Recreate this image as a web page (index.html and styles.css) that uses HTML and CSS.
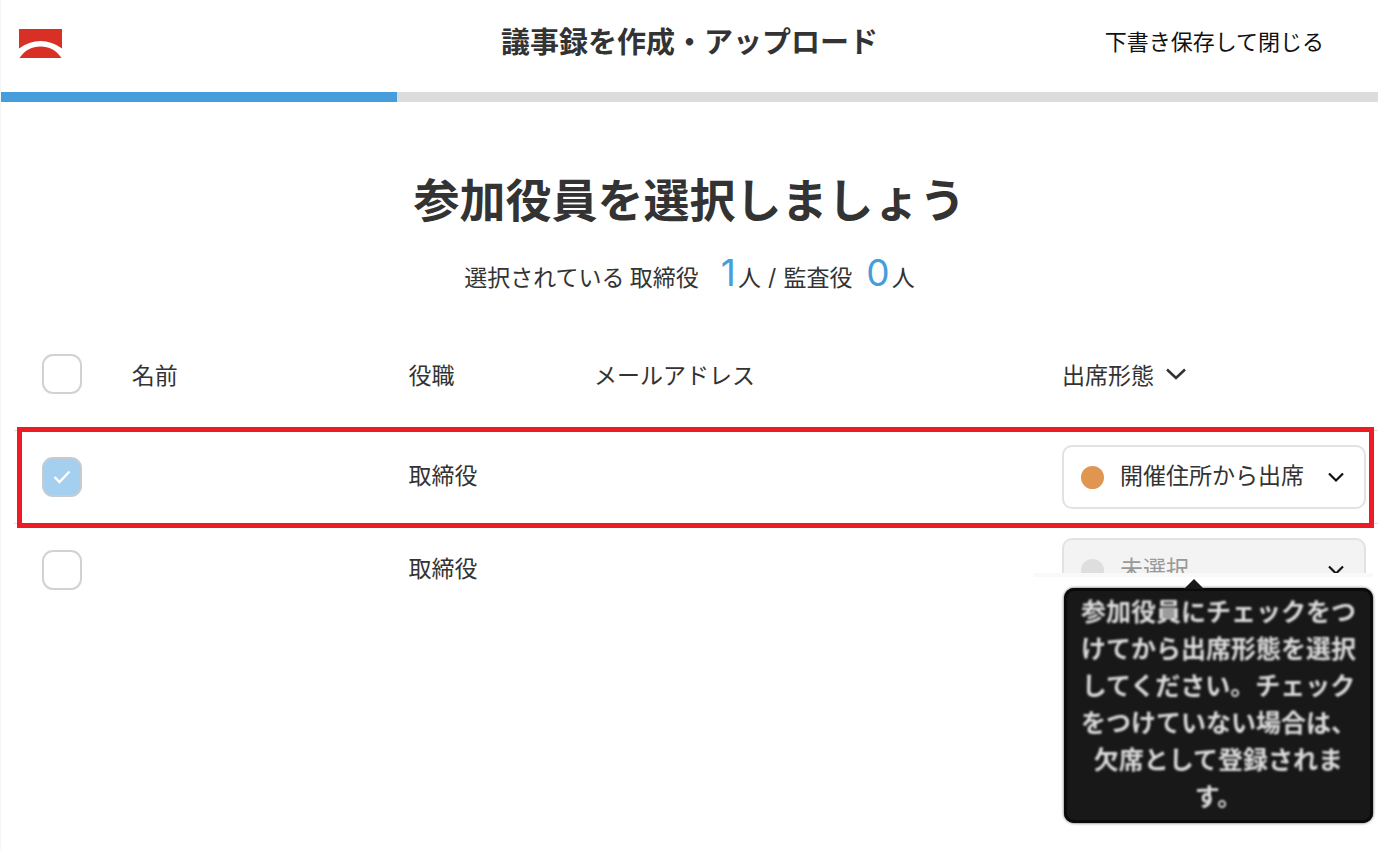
FILE: index.html
```html
<!DOCTYPE html>
<html lang="ja">
<head>
<meta charset="utf-8">
<title>議事録を作成・アップロード</title>
<link rel="stylesheet" href="styles.css">
</head>
<body>
<div class="page">
  <header class="header">
    <a class="logo" href="#" aria-label="ホーム">
      <svg width="43" height="29" viewBox="0 0 43 29" aria-hidden="true">
        <path fill="#d93025" d="M0 0H43V19.500Q33 12 21.500 12T0 19.500Z"/>
        <path fill="#d93025" d="M0.500 29C6 21 13 17.500 21.500 17.500S37 21 42.500 29Z"/>
      </svg>
    </a>
    <p class="header-title">議事録を作成・アップロード</p>
    <button class="close-button" type="button">下書き保存して閉じる</button>
  </header>
  <div class="progress"><div class="progress-fill"></div></div>

  <main>
    <h1 class="heading">参加役員を選択しましょう</h1>
    <p class="summary">選択されている 取締役 <span class="count">1</span>人 <span class="separator">/</span> 監査役 <span class="count">0</span>人</p>

    <table class="officers">
      <colgroup>
        <col class="col-check"><col class="col-name"><col class="col-role"><col class="col-mail"><col class="col-form">
      </colgroup>
      <thead>
        <tr>
          <th class="check-cell"><label class="check"><input type="checkbox" aria-label="すべて選択"></label></th>
          <th>名前</th>
          <th>役職</th>
          <th>メールアドレス</th>
          <th>
            <button class="sort-button" type="button">出席形態
              <svg width="22" height="14" viewBox="0 0 22 14" aria-hidden="true"><path d="M2 2.500L11 11L20 2.500" fill="none" stroke="#333" stroke-width="2.600"/></svg>
            </button>
          </th>
        </tr>
      </thead>
      <tbody>
        <tr class="highlighted">
          <td class="check-cell">
            <label class="check"><input type="checkbox" aria-label="取締役を選択" checked>
              <svg width="18" height="14" viewBox="0 0 18 14" aria-hidden="true"><path d="M1.500 7L6.500 12L16.500 1.500" fill="none" stroke="#fff" stroke-width="2.400"/></svg>
            </label>
          </td>
          <td></td>
          <td>取締役</td>
          <td></td>
          <td class="form-cell">
            <div class="select-box">
              <span class="dot"></span>
              <select aria-label="出席形態"><option>開催住所から出席</option></select>
              <svg class="chevron" width="16" height="11" viewBox="0 0 16 11" aria-hidden="true"><path d="M1 1.500L8 8.500L15 1.500" fill="none" stroke="#111" stroke-width="2.200"/></svg>
            </div>
          </td>
        </tr>
        <tr>
          <td class="check-cell"><label class="check"><input type="checkbox" aria-label="取締役を選択"></label></td>
          <td></td>
          <td>取締役</td>
          <td></td>
          <td class="form-cell">
            <div class="select-box inactive">
              <span class="dot"></span>
              <select aria-label="出席形態" disabled><option>未選択</option></select>
              <svg class="chevron" width="16" height="11" viewBox="0 0 16 11" aria-hidden="true"><path d="M1 1.500L8 8.500L15 1.500" fill="none" stroke="#111" stroke-width="2.200"/></svg>
              <div class="tooltip-layer">
                <div class="tooltip" role="tooltip"><p>参加役員にチェックをつけてから出席形態を選択してください。チェックをつけていない場合は、欠席として登録されます。</p></div>
              </div>
            </div>
          </td>
        </tr>
      </tbody>
    </table>
  </main>
</div>
</body>
</html>
```
FILE: styles.css
```css
* { box-sizing: border-box; }

body {
  margin: 0;
  background: #fff;
  color: #333;
  font-family: "Noto Sans CJK JP", sans-serif;
  font-size: 23px;
  line-height: 32px;
}

p, h1 { margin: 0; }

button, select {
  font: inherit;
  color: inherit;
  background: none;
  border: 0;
  padding: 0;
}

.page {
  min-height: 100vh;
  margin-right: 21px;
  border-left: 1px solid #f6f6f6;
}

.header {
  display: grid;
  grid-template-columns: 1fr auto 1fr;
  align-items: center;
  height: 92px;
  padding: 0 54px 12px 18px;
}

.logo {
  display: flex;
  padding-top: 7px;
}

.header-title {
  padding-left: 36px;
  font-size: 29px;
  font-weight: 700;
}

.close-button {
  justify-self: end;
  color: #111;
  font-size: 22px;
}

.progress {
  height: 10px;
  background: #dcdcdc;
}

.progress-fill {
  width: 28.75%;
  height: 100%;
  background: #459ddc;
}

.heading {
  padding-top: 62px;
  font-size: 46px;
  font-weight: 700;
  line-height: 66px;
  text-align: center;
}

.summary {
  padding-top: 22px;
  line-height: 48px;
  text-align: center;
}

.count {
  display: inline-block;
  min-width: 24px;
  margin: 0 2px 0 8px;
  color: #459ddc;
  font-family: Inter, sans-serif;
  font-size: 37px;
  line-height: 40px;
  text-align: right;
}

.separator {
  padding: 0 2px;
  font-family: Inter, sans-serif;
}

.officers {
  width: calc(100% - 13px);
  margin: 16px 0 0 13px;
  table-layout: fixed;
  border-collapse: separate;
  border-spacing: 0;
}

.col-check { width: 7.6%; }
.col-name { width: 20.3%; }
.col-role { width: 13.6%; }
.col-mail { width: 34.3%; }
.col-form { width: 24.2%; }

.officers th {
  height: 112px;
  padding: 0 12px 0 14px;
  font-weight: 400;
  text-align: left;
}

.officers td {
  height: 93px;
  padding: 0 12px 6px 14px;
  border-top: 1px solid #dedede;
}

.officers .check-cell { padding: 0 0 0 28px; }

.officers .form-cell { padding-bottom: 0; }

.check {
  display: grid;
  place-items: center;
  width: 40px;
  height: 40px;
}

.check > * { grid-area: 1 / 1; }

.check svg { z-index: 1; }

.check input {
  appearance: none;
  width: 40px;
  height: 40px;
  margin: 0;
  border: 2px solid #d2d2d2;
  border-radius: 11px;
  background: #fff;
}

.check input:checked {
  border-color: #c4ccd2;
  background: #a5cfee;
}

.sort-button {
  display: flex;
  align-items: center;
  gap: 11px;
}

.highlighted { position: relative; }

.highlighted .form-cell::after {
  content: "";
  position: absolute;
  inset: -3px 4px -5px 3px;
  border: 5px solid #ed1c24;
  pointer-events: none;
}

.select-box {
  position: relative;
  display: grid;
  align-items: center;
}

.select-box > select,
.select-box > .dot,
.select-box > .chevron { grid-area: 1 / 1; }

.select-box select {
  appearance: none;
  width: 100%;
  height: 64px;
  padding: 0 50px 6px 56px;
  border: 2px solid #e2e2e2;
  border-radius: 10px;
  background: #fff;
}

.dot {
  z-index: 1;
  width: 23px;
  height: 23px;
  margin-left: 19px;
  border-radius: 50%;
  background: #e09550;
}

.chevron {
  z-index: 1;
  justify-self: end;
  margin-right: 22px;
}

.select-box.inactive select {
  color: #999;
  background: #f3f3f3;
  opacity: 1;
}

.inactive .dot { background: #dedede; }

.tooltip-layer {
  position: absolute;
  z-index: 2;
  top: 35px;
  left: -28px;
  right: -7px;
  padding: 11px 0 0 30px;
  border-top: 4px solid #f9f9f9;
  background: #fff;
}

.tooltip {
  position: relative;
  padding: 4px 16px 9px;
  border-radius: 10px;
  background: #181818;
  box-shadow: inset 0 0 0 3px #0b0b0b, 0 0 3px #444;
  color: #ddd;
  font-size: 25px;
  font-weight: 700;
  line-height: 37px;
  text-align: center;
}

.tooltip::before {
  content: "";
  position: absolute;
  top: -9px;
  left: 120px;
  border: solid transparent;
  border-width: 0 10px 10px;
  border-bottom-color: #181818;
}

.tooltip p { filter: blur(1px); }
```
